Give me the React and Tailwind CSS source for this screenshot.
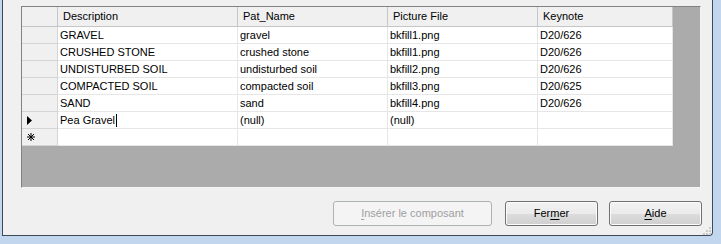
import React from 'react';

const COLS = [
  { key: 'desc', label: 'Description', w: 'w-[180px]' },
  { key: 'pat', label: 'Pat_Name', w: 'w-[150px]' },
  { key: 'pic', label: 'Picture File', w: 'w-[150px]' },
  { key: 'key', label: 'Keynote', w: 'w-[135px]' },
];

const ROWS = [
  { desc: 'GRAVEL', pat: 'gravel', pic: 'bkfill1.png', key: 'D20/626' },
  { desc: 'CRUSHED STONE', pat: 'crushed stone', pic: 'bkfill1.png', key: 'D20/626' },
  { desc: 'UNDISTURBED SOIL', pat: 'undisturbed soil', pic: 'bkfill2.png', key: 'D20/626' },
  { desc: 'COMPACTED SOIL', pat: 'compacted soil', pic: 'bkfill3.png', key: 'D20/625' },
  { desc: 'SAND', pat: 'sand', pic: 'bkfill4.png', key: 'D20/626' },
  { desc: 'Pea Gravel', pat: '(null)', pic: '(null)', key: '', current: true },
  { desc: '', pat: '', pic: '', key: '', isNew: true },
];

function Arrow() {
  return (
    <svg width="5" height="9" viewBox="0 0 5 9" className="block">
      <path d="M0 0 L5 4.5 L0 9 Z" fill="#000" />
    </svg>
  );
}

function Star() {
  return (
    <svg width="8" height="8" viewBox="0 0 8 8" className="block">
      <path d="M4 0 V8 M0 4 H8 M1 1 L7 7 M7 1 L1 7" stroke="#000" strokeWidth="1" />
    </svg>
  );
}

function Grip() {
  const dots = [
    [6, 0], [6, 3], [3, 3], [6, 6], [3, 6], [0, 6],
  ];
  return (
    <svg width="8" height="8" viewBox="0 0 8 8" className="block">
      {dots.map(([x, y], i) => (
        <rect key={i} x={x} y={y} width="2" height="2" fill="#c9c9c9" />
      ))}
    </svg>
  );
}

function Button({ children, disabled, className = '' }) {
  return (
    <div
      className={`h-[25px] flex items-center justify-center rounded-[3px] border text-[11px] ${
        disabled
          ? 'border-[#adb2b5] bg-[#f4f4f4] text-[#a0a0a0]'
          : 'border-[#707070] bg-[linear-gradient(to_bottom,#f2f2f2_0%,#ebebeb_50%,#dddddd_50%,#cfcfcf_100%)] text-black shadow-[inset_0_0_0_1px_#fcfcfc]'
      } ${className}`}
    >
      {children}
    </div>
  );
}

export default function App() {
  return (
    <div className="w-[721px] h-[244px] bg-[#c2d6ee] font-['Liberation_Sans',Arial,sans-serif] text-[11px] text-black overflow-hidden">
      <div className="ml-[2px] w-[711px] h-[236px] flex flex-col bg-[#f0f0f0] border-l border-r border-b border-[#3f4a58] rounded-br-[4px] pl-[18px] pt-[6px] pr-[10px]">
        {/* data grid */}
        <div className="w-[680px] h-[183px] border border-t-[#828282] border-l-[#828282] border-r-[#f4f4f4] border-b-[#f4f4f4] bg-[#ababab] flex flex-col">
          <div className="flex h-[20px]">
            <div className="w-[36px] bg-[#f0f0f0] border-r border-b border-[#c6c6c6]" />
            {COLS.map((c) => (
              <div
                key={c.key}
                className={`${c.w} bg-[#f0f0f0] border-r border-b border-[#c6c6c6] pl-[5px] leading-[19px] whitespace-nowrap`}
              >
                {c.label}
              </div>
            ))}
          </div>
          {ROWS.map((r, i) => (
            <div key={i} className="flex h-[17px]">
              <div className="w-[36px] bg-[#f0f0f0] border-r border-b border-[#d4d4d4] flex items-center pl-[5px]">
                {r.current && <Arrow />}
                {r.isNew && <Star />}
              </div>
              {COLS.map((c) => (
                <div
                  key={c.key}
                  className={`${c.w} bg-white border-r border-b border-[#e6e6e6] pl-[2px] leading-[16px] whitespace-nowrap flex items-center`}
                >
                  <span>{r[c.key]}</span>
                  {r.current && c.key === 'desc' && (
                    <span className="ml-px w-px h-[13px] bg-black" />
                  )}
                </div>
              ))}
            </div>
          ))}
        </div>

        {/* buttons */}
        <div className="mt-[13px] flex justify-end">
          <Button disabled className="w-[159px]">
            <span className="underline underline-offset-2">I</span>nsérer le composant
          </Button>
          <Button className="w-[93px] ml-[13px]">
            Fer<span className="underline underline-offset-2">m</span>er
          </Button>
          <Button className="w-[93px] ml-[11px]">
            <span className="underline underline-offset-2">A</span>ide
          </Button>
        </div>
        <div className="flex justify-end mt-px -mr-[9px]">
          <Grip />
        </div>
      </div>
    </div>
  );
}
